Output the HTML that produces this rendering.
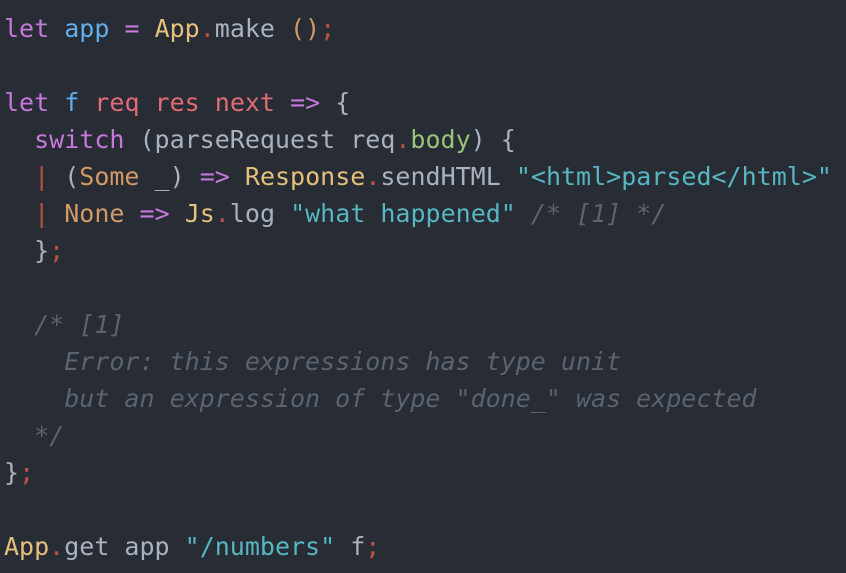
<!DOCTYPE html>
<html><head><style>
html,body{margin:0;padding:0;background:#282c34;width:846px;height:573px;overflow:hidden}
pre{margin:0;padding:10px 0 0 4px;font-family:"DejaVu Sans Mono","Liberation Mono",monospace;font-size:25px;line-height:37px;color:#abb2bf;letter-spacing:0}
.k{color:#c678dd}.b{color:#61afef}.y{color:#e5c07b}.o{color:#d19a66}.r{color:#e06c75}.rd{color:#be5046}.g{color:#98c379}.s{color:#56b6c2}.c{color:#5c6370;font-style:italic}
</style></head><body><pre><span class="k">let</span> <span class="b">app</span> <span class="k">=</span> <span class="y">App</span><span class="rd">.</span>make <span class="o">()</span><span class="rd">;</span>

<span class="k">let</span> <span class="b">f</span> <span class="r">req</span> <span class="r">res</span> <span class="r">next</span> <span class="k">=&gt;</span> {
  <span class="k">switch</span> (parseRequest req<span class="rd">.</span><span class="g">body</span>) {
  <span class="rd">|</span> (<span class="o">Some</span> _) <span class="k">=&gt;</span> <span class="y">Response</span><span class="rd">.</span>sendHTML <span class="s">"&lt;html&gt;parsed&lt;/html&gt;"</span>
  <span class="rd">|</span> <span class="o">None</span> <span class="k">=&gt;</span> <span class="y">Js</span><span class="rd">.</span>log <span class="s">"what happened"</span> <span class="c">/* [1] */</span>
  }<span class="rd">;</span>

  <span class="c">/* [1]
    Error: this expressions has type unit
    but an expression of type "done_" was expected
  */</span>
}<span class="rd">;</span>

<span class="y">App</span><span class="rd">.</span>get app <span class="s">"/numbers"</span> f<span class="rd">;</span></pre></body></html>
